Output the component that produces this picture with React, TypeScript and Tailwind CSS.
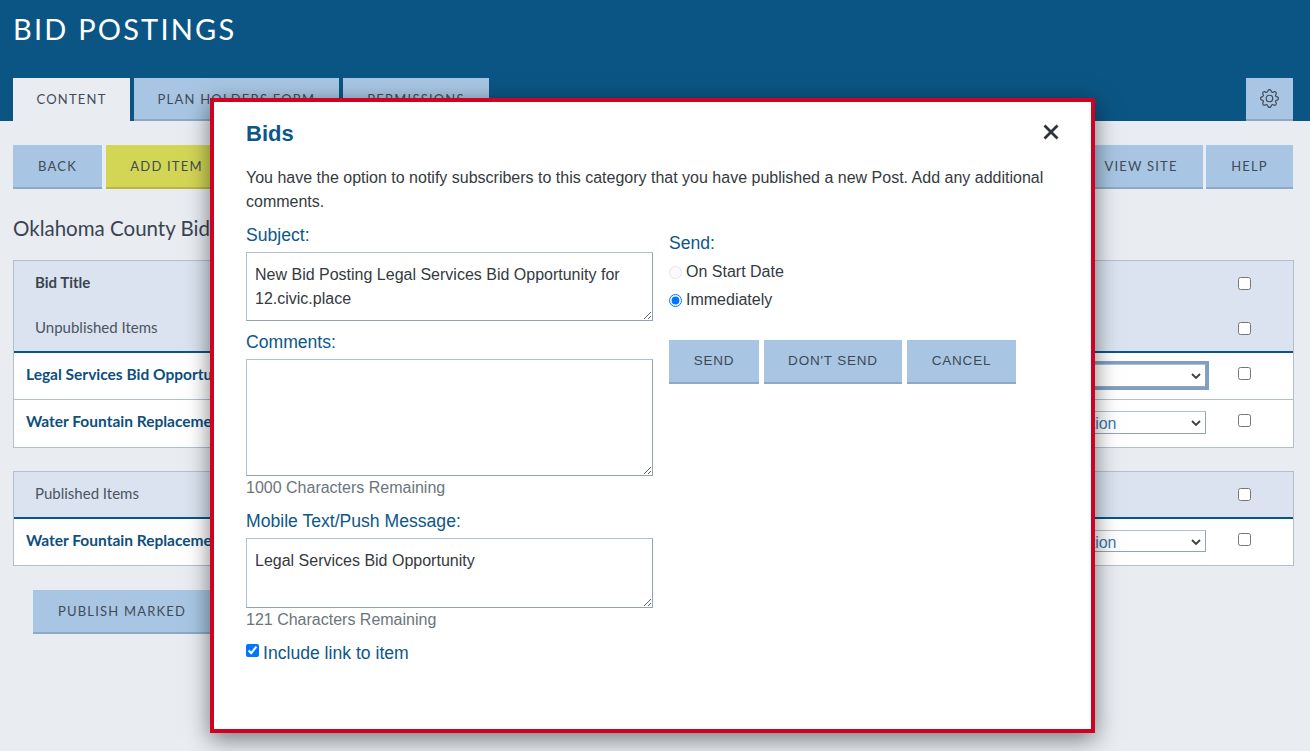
import React from "react";
import { BsGear } from "react-icons/bs";

const pageFont = "font-['Lato','Noto_Sans',sans-serif]";

const blueBtn =
  "h-[44px] pt-[1px] bg-[#a8c6e3] border-b-2 border-[#8fa8c5] text-[13px] tracking-[1.2px] text-[#414b57] uppercase flex items-center justify-center shrink-0";
const modalBtn =
  "h-[44px] bg-[#a8c6e3] border-b-2 border-[#8fa8c5] text-[13.5px] tracking-[0.8px] text-[#3f4852] uppercase flex items-center justify-center shrink-0";
const tabBlue =
  "bg-[#a8c6e3] border-b-2 border-[#8fa8c5] text-[13px] tracking-[1.2px] text-[#414b57] flex items-center justify-center";
const areaBorder = "border border-[#b0c0d0] border-b-[#94a3b4] border-r-[#94a3b4]";

const Check = () => <input type="checkbox" className="w-[13px] h-[13px] m-0 block" />;

const ItemRow = ({
  title,
  value,
  focused,
  height,
  selectH,
  last,
}: {
  title: string;
  value: string;
  focused?: boolean;
  height: string;
  selectH: string;
  last?: boolean;
}) => (
  <div className={`flex bg-white ${height} ${last ? "" : "border-b border-[#b3bfcf]"}`}>
    <div className="flex-1 pl-3 pt-[11px] text-[15.5px] font-bold text-[#0d4f7e] leading-5">{title}</div>
    <div className="pt-[11px]">
      <div className="relative">
        <select
          defaultValue={value}
          className={`block appearance-none w-[187px] ${selectH} bg-white pl-1 font-['Liberation_Sans',Arial,sans-serif] text-[16px] text-[#3c78ad] border border-[#b0c0d0] border-b-[#94a3b4] border-r-[#94a3b4] ${
            focused ? "outline-[3px] outline-[#7f9fc4] outline-solid" : ""
          }`}
        >
          <option value="">{""}</option>
          <option>Select Action</option>
        </select>
        <svg width="10" height="6" viewBox="0 0 10 6" className="absolute right-[5px] top-[9px]">
          <path d="M1 1 L5 5 L9 1" fill="none" stroke="#3a3f45" strokeWidth="1.8" />
        </svg>
      </div>
    </div>
    <div className="w-[87px] pt-[14px] pl-[32px]">
      <Check />
    </div>
  </div>
);

const Modal = () => (
  <div className="absolute left-[210px] top-[98px] w-[885px] h-[635px] bg-white border-4 border-[#d0021f] shadow-[0_6px_22px_rgba(0,0,0,0.5)] pl-[32px] pr-[32px] font-['Liberation_Sans',Arial,sans-serif]">
    <div className="flex items-start justify-between pt-[20px] h-[61px]">
      <h2 className="text-[22px] leading-[24px] font-bold text-[#0d5788]">Bids</h2>
      <svg width="16" height="16" viewBox="0 0 16 16" className="mt-[2px]">
        <path d="M1.5 1.5 L14.5 14.5 M14.5 1.5 L1.5 14.5" stroke="#2d3338" strokeWidth="2.8" />
      </svg>
    </div>
    <p className="text-[16px] leading-[24px] text-[#343a40] w-[815px] h-[48px] mt-[3px]">
      You have the option to notify subscribers to this category that you have published a new Post. Add any additional comments.
    </p>
    <div className="flex gap-[16px]">
      <div className="w-[407px] shrink-0">
        <label className="block text-[17.6px] leading-[24px] text-[#0d5788] mt-[9px]">Subject:</label>
        <textarea
          readOnly
          defaultValue="New Bid Posting Legal Services Bid Opportunity for 12.civic.place"
          className={`block w-[407px] h-[69px] mt-[5px] ${areaBorder} px-[8px] py-[10px] text-[16px] leading-[24px] text-[#343a40]`}
        />
        <label className="block text-[17.6px] leading-[24px] text-[#0d5788] mt-[9px]">Comments:</label>
        <textarea
          readOnly
          className={`block w-[407px] h-[117px] mt-[5px] ${areaBorder} px-[8px] py-[10px] text-[16px]`}
        />
        <div className="text-[16px] leading-[22px] text-[#6c757d] mt-[1px]">1000 Characters Remaining</div>
        <label className="block text-[17.6px] leading-[24px] text-[#0d5788] mt-[10px]">Mobile Text/Push Message:</label>
        <textarea
          readOnly
          defaultValue="Legal Services Bid Opportunity"
          className={`block w-[407px] h-[70px] mt-[5px] ${areaBorder} px-[8px] py-[10px] text-[16px] leading-[24px] text-[#343a40]`}
        />
        <div className="text-[16px] leading-[22px] text-[#6c757d] mt-[1px]">121 Characters Remaining</div>
        <div className="flex items-start mt-[10px]">
          <input type="checkbox" defaultChecked className="w-[13px] h-[13px] m-0 mt-[3px] block" />
          <span className="ml-[4px] text-[17.6px] leading-[24px] text-[#0d5788]">Include link to item</span>
        </div>
      </div>
      <div className="flex-1">
        <div className="text-[17.6px] leading-[24px] text-[#0d5788] mt-[17px]">Send:</div>
        <div className="flex items-center mt-[3px] h-[28px]">
          <input type="radio" name="send" disabled className="w-[13px] h-[13px] m-0 block opacity-50" />
          <span className="ml-[4px] text-[16px] text-[#343a40]">On Start Date</span>
        </div>
        <div className="flex items-center h-[28px]">
          <input type="radio" name="send" defaultChecked className="w-[13px] h-[13px] m-0 block" />
          <span className="ml-[4px] text-[16px] text-[#343a40]">Immediately</span>
        </div>
        <div className="flex gap-[5px] mt-[26px]">
          <div className={`${modalBtn} w-[90px]`}>Send</div>
          <div className={`${modalBtn} w-[138px]`}>Don't Send</div>
          <div className={`${modalBtn} w-[109px]`}>Cancel</div>
        </div>
      </div>
    </div>
  </div>
);

export default function App() {
  return (
    <div className={`relative w-[1310px] h-[751px] overflow-hidden bg-[#e9edf2] ${pageFont}`}>
      <header className="h-[121px] bg-[#0b5585] flex flex-col justify-between pl-[13px] pr-[17px]">
        <h1 className="text-[29px] leading-[36px] tracking-[2.2px] text-white uppercase mt-[11px]">Bid Postings</h1>
        <div className="flex gap-[4px] h-[43px]">
          <div className="w-[117px] bg-[#e9edf2] text-[13px] tracking-[1.2px] text-[#414b57] flex items-center justify-center pt-[1px]">CONTENT</div>
          <div className={`w-[205px] pt-[2px] ${tabBlue}`}>PLAN HOLDERS FORM</div>
          <div className={`w-[146px] pt-[2px] ${tabBlue}`}>PERMISSIONS</div>
          <div className="ml-auto w-[47px] bg-[#a8c6e3] border-b-2 border-[#8fa8c5] flex items-center justify-center text-[#414b57]">
            <BsGear size={19} />
          </div>
        </div>
      </header>

      <main className="pl-[13px] pr-[17px]">
        <div className="flex justify-between pt-[24px]">
          <div className="flex gap-[4px]">
            <div className={`${blueBtn} w-[89px]`}>Back</div>
            <div className="h-[44px] pt-[1px] w-[121px] bg-[#d3d655] border-b-2 border-[#b5b84a] text-[13px] tracking-[1.2px] text-[#414b57] flex items-center justify-center">ADD ITEM</div>
          </div>
          <div className="flex gap-[3px]">
            <div className={`${blueBtn} w-[124px]`}>View Site</div>
            <div className={`${blueBtn} w-[87px]`}>Help</div>
          </div>
        </div>

        <h2 className="text-[20.5px] leading-[28px] text-[#3a4450] mt-[25px]">Oklahoma County Bid Postings</h2>

        <div className="mt-[18px] -mr-px border border-[#b3bfcf]">
          <div className="bg-[#dae3ef] h-[92px] border-b-2 border-[#0b5585]">
            <div className="flex h-[45px] items-center">
              <div className="flex-1 pl-[21px] pb-[2px] text-[15px] font-bold text-[#3a4450]">Bid Title</div>
              <div className="w-[87px] pl-[32px]"><Check /></div>
            </div>
            <div className="flex h-[45px] items-center">
              <div className="flex-1 pl-[21px] pb-[2px] text-[15px] text-[#4a5562]">Unpublished Items</div>
              <div className="w-[87px] pl-[32px]"><Check /></div>
            </div>
          </div>
          <ItemRow title="Legal Services Bid Opportunity" value="" focused height="h-[47px]" selectH="h-[23px]" />
          <ItemRow title="Water Fountain Replacement" value="Select Action" height="h-[47px]" selectH="h-[23px]" last />
        </div>

        <div className="mt-[23px] -mr-px border border-[#b3bfcf]">
          <div className="bg-[#dae3ef] h-[47px] border-b-2 border-[#0b5585] flex items-center">
            <div className="flex-1 pl-[21px] pb-[2px] text-[15px] text-[#4a5562]">Published Items</div>
            <div className="w-[87px] pl-[32px]"><Check /></div>
          </div>
          <ItemRow title="Water Fountain Replacement" value="Select Action" height="h-[46px]" selectH="h-[22px]" last />
        </div>

        <div className="pl-[20px] pt-[24px]">
          <div className={`${blueBtn} w-[178px]`}>Publish Marked</div>
        </div>
      </main>

      <Modal />
    </div>
  );
}
